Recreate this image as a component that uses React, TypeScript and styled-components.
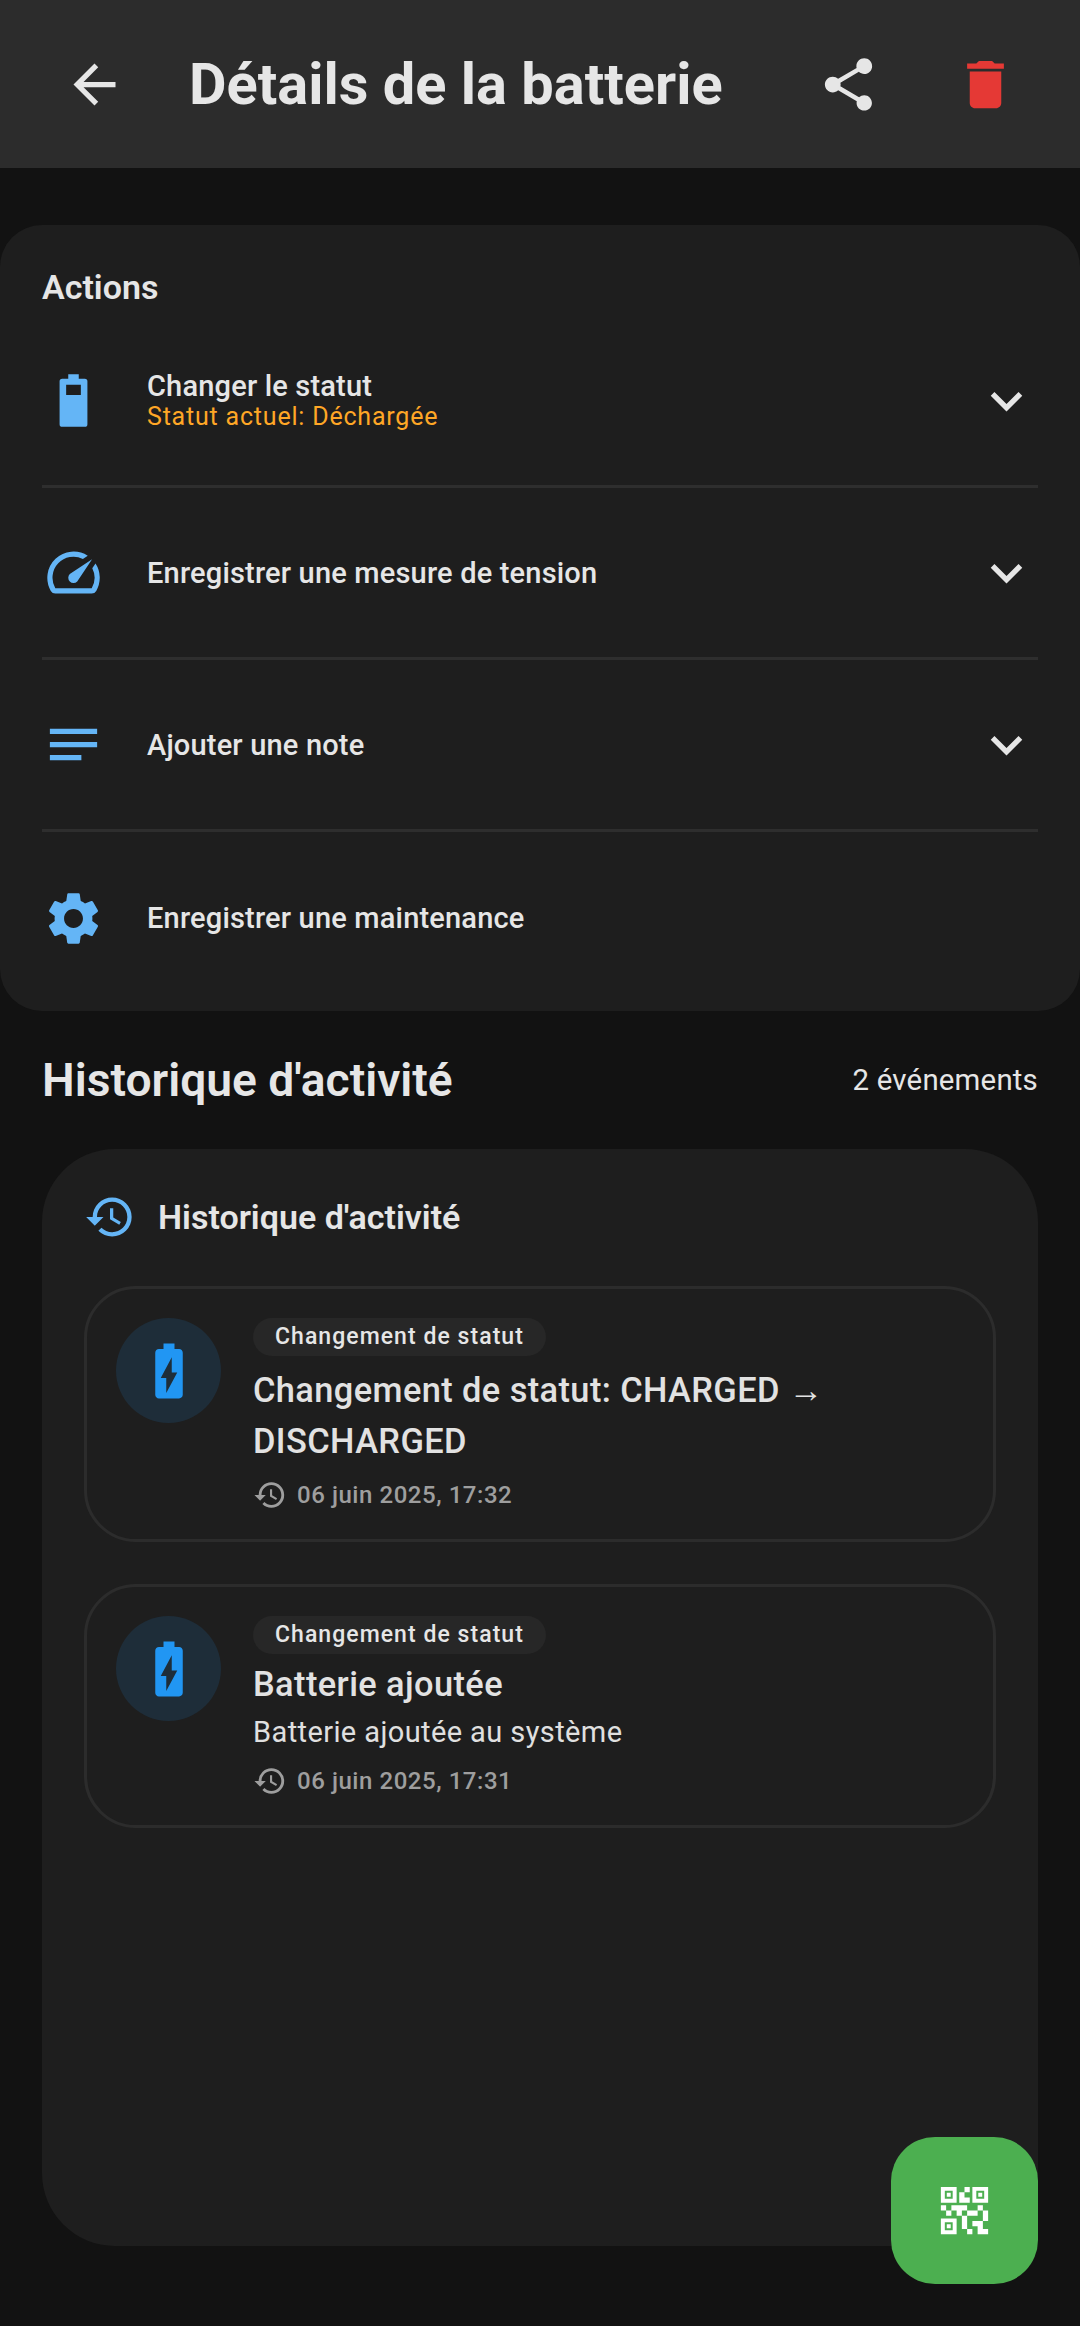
import React from 'react'
import styled, { createGlobalStyle } from 'styled-components'
import {
  MdArrowBack,
  MdShare,
  MdDelete,
  MdSpeed,
  MdNotes,
  MdSettings,
  MdHistory,
  MdBatteryChargingFull,
  MdKeyboardArrowDown,
  MdQrCode2,
} from 'react-icons/md'

const GlobalStyle = createGlobalStyle`
  html, body {
    margin: 0;
    padding: 0;
    background: #121212;
    font-family: Roboto, "Liberation Sans", sans-serif;
  }
`

const Screen = styled.div`
  position: relative;
  width: 1080px;
  height: 2326px;
  overflow: hidden;
  background: #121212;
  color: #e6e6e6;
`

const Header = styled.header`
  height: 168px;
  display: flex;
  align-items: center;
  background: #2c2c2c;
  color: #e6e6e6;
`

const HeaderIcon = styled.div<{ $color?: string }>`
  width: 63px;
  height: 63px;
  display: flex;
  align-items: center;
  justify-content: center;
  color: ${p => p.$color || '#e6e6e6'};
  font-size: 63px;
`

const BackSlot = styled(HeaderIcon)`
  margin-left: 63px;
`

const ShareSlot = styled(HeaderIcon)`
  margin-left: auto;
`

const DeleteSlot = styled(HeaderIcon)`
  margin-left: 74px;
  margin-right: 63px;
`

const Title = styled.h1`
  margin: 0 0 0 63px;
  font-size: 57.75px;
  font-weight: 700;
  white-space: nowrap;
`

const ActionsCard = styled.section`
  margin-top: 57px;
  height: 786px;
  box-sizing: border-box;
  padding: 42px 42px 0;
  background: #1e1e1e;
  border-radius: 42px;
`

const ActionsTitle = styled.h2`
  margin: 0;
  height: 40px;
  line-height: 40px;
  font-size: 34px;
  font-weight: 600;
  color: #e6e6e6;
`

const Rows = styled.div`
  margin-top: 9px;
`

const ActionRow = styled.div<{ $last?: boolean }>`
  height: 172px;
  box-sizing: border-box;
  display: flex;
  align-items: center;
  border-bottom: ${p => (p.$last ? 'none' : '3px solid #2e2e2e')};
`

const ActionIcon = styled.div`
  width: 63px;
  margin-right: 42px;
  display: flex;
  justify-content: center;
  color: #64b5f6;
  font-size: 63px;
`

const ActionText = styled.div`
  flex: 1;
  display: flex;
  flex-direction: column;
`

const ActionLabel = styled.span`
  font-size: 29px;
  font-weight: 500;
  line-height: 32px;
  letter-spacing: 0.18px;
  color: #e6e6e6;
`

const ActionStatus = styled.span`
  font-size: 25px;
  line-height: 30px;
  letter-spacing: 0.8px;
  color: #ffa726;
`

const Chevron = styled.div`
  display: flex;
  width: 63px;
  justify-content: center;
  color: #e6e6e6;
  font-size: 66px;
`

const HistoryHead = styled.div`
  height: 138px;
  padding: 0 42px;
  display: flex;
  align-items: center;
  justify-content: space-between;
`

const HistoryHeading = styled.h2`
  margin: 0;
  font-size: 46.2px;
  font-weight: 600;
`

const EventCount = styled.span`
  font-size: 29.4px;
  letter-spacing: 0.2px;
`

const TimelineCard = styled.section`
  margin: 0 42px;
  height: 1097px;
  box-sizing: border-box;
  padding: 42px;
  background: #1e1e1e;
  border-radius: 73px;
`

const TimelineHead = styled.div`
  display: flex;
  align-items: center;
  height: 52px;
  margin-bottom: 43px;
`

const TimelineHeadIcon = styled.div`
  display: flex;
  margin-right: 22px;
  color: #64b5f6;
  font-size: 52px;
`

const TimelineTitle = styled.h3`
  margin: 0;
  font-size: 34px;
  font-weight: 600;
`

const EventCard = styled.article`
  box-sizing: border-box;
  display: flex;
  gap: 32px;
  padding: 29px 29px 0;
  margin-bottom: 42px;
  border: 3px solid #2c2c2c;
  border-radius: 52px;
`

const EventBadge = styled.div`
  flex: none;
  width: 105px;
  height: 105px;
  border-radius: 50%;
  display: flex;
  align-items: center;
  justify-content: center;
  background: rgba(33, 150, 243, 0.13);
  color: #2196f3;
  font-size: 66px;
`

const EventBody = styled.div`
  flex: 1;
  min-width: 0;
  padding-bottom: 26px;
`

const Chip = styled.span`
  display: block;
  width: fit-content;
  height: 38px;
  line-height: 38px;
  padding: 0 22px;
  border-radius: 19px;
  background: #272727;
  font-size: 23px;
  font-weight: 500;
  letter-spacing: 1.05px;
  color: #e6e6e6;
`

const EventTitle = styled.div<{ $wrapped?: boolean }>`
  margin-top: 9px;
  font-size: 34.4px;
  font-weight: 500;
  line-height: ${p => (p.$wrapped ? '51px' : '42px')};
  letter-spacing: 0.4px;
  color: #e2e2e2;
`

const EventDesc = styled.div`
  margin-top: 6px;
  font-size: 29px;
  line-height: 42px;
  letter-spacing: 0.4px;
  color: #e0e0e0;
`

const EventDate = styled.div`
  display: flex;
  align-items: center;
  gap: 10px;
  margin-top: 10px;
  height: 36px;
  font-size: 24px;
  font-weight: 500;
  letter-spacing: 0.55px;
  color: #9e9e9e;
`

const DateIcon = styled.span`
  display: flex;
  font-size: 34px;
`

const QrButton = styled.button`
  position: absolute;
  left: 891px;
  top: 2137px;
  width: 147px;
  height: 147px;
  border: none;
  padding: 0;
  display: flex;
  align-items: center;
  justify-content: center;
  border-radius: 44px;
  background: #4caf50;
  color: #fff;
  font-size: 63px;
`

const BatteryStatusIcon = () => (
  <svg width="1em" height="1em" viewBox="0 0 24 24" fill="currentColor">
    <path
      fillRule="evenodd"
      d="M10 2h4v1.7h2.3a1 1 0 0 1 1 1V21a1 1 0 0 1-1 1H7.700a1 1 0 0 1-1-1V4.700a1 1 0 0 1 1-1H10V2zM9.200 6v3.900h5.600V6H9.200z"
    />
  </svg>
)

const events = [
  { title: 'Changement de statut: CHARGED → DISCHARGED', date: '06 juin 2025, 17:32', wrapped: true },
  { title: 'Batterie ajoutée', desc: 'Batterie ajoutée au système', date: '06 juin 2025, 17:31' },
]

export default function App() {
  return (
    <Screen>
      <GlobalStyle />
      <Header>
        <BackSlot><MdArrowBack /></BackSlot>
        <Title>Détails de la batterie</Title>
        <ShareSlot><MdShare /></ShareSlot>
        <DeleteSlot $color="#e53935"><MdDelete /></DeleteSlot>
      </Header>

      <ActionsCard>
        <ActionsTitle>Actions</ActionsTitle>
        <Rows>
          <ActionRow>
            <ActionIcon><BatteryStatusIcon /></ActionIcon>
            <ActionText>
              <ActionLabel>Changer le statut</ActionLabel>
              <ActionStatus>Statut actuel: Déchargée</ActionStatus>
            </ActionText>
            <Chevron><MdKeyboardArrowDown /></Chevron>
          </ActionRow>
          <ActionRow>
            <ActionIcon><MdSpeed /></ActionIcon>
            <ActionText><ActionLabel>Enregistrer une mesure de tension</ActionLabel></ActionText>
            <Chevron><MdKeyboardArrowDown /></Chevron>
          </ActionRow>
          <ActionRow>
            <ActionIcon><MdNotes /></ActionIcon>
            <ActionText><ActionLabel>Ajouter une note</ActionLabel></ActionText>
            <Chevron><MdKeyboardArrowDown /></Chevron>
          </ActionRow>
          <ActionRow $last>
            <ActionIcon><MdSettings /></ActionIcon>
            <ActionText><ActionLabel>Enregistrer une maintenance</ActionLabel></ActionText>
          </ActionRow>
        </Rows>
      </ActionsCard>

      <HistoryHead>
        <HistoryHeading>Historique d'activité</HistoryHeading>
        <EventCount>2 événements</EventCount>
      </HistoryHead>

      <TimelineCard>
        <TimelineHead>
          <TimelineHeadIcon><MdHistory /></TimelineHeadIcon>
          <TimelineTitle>Historique d'activité</TimelineTitle>
        </TimelineHead>
        {events.map(ev => (
          <EventCard key={ev.date}>
            <EventBadge><MdBatteryChargingFull /></EventBadge>
            <EventBody>
              <Chip>Changement de statut</Chip>
              <EventTitle $wrapped={ev.wrapped}>{ev.title}</EventTitle>
              {ev.desc && <EventDesc>{ev.desc}</EventDesc>}
              <EventDate>
                <DateIcon><MdHistory /></DateIcon>
                {ev.date}
              </EventDate>
            </EventBody>
          </EventCard>
        ))}
      </TimelineCard>

      <QrButton><MdQrCode2 /></QrButton>
    </Screen>
  )
}
